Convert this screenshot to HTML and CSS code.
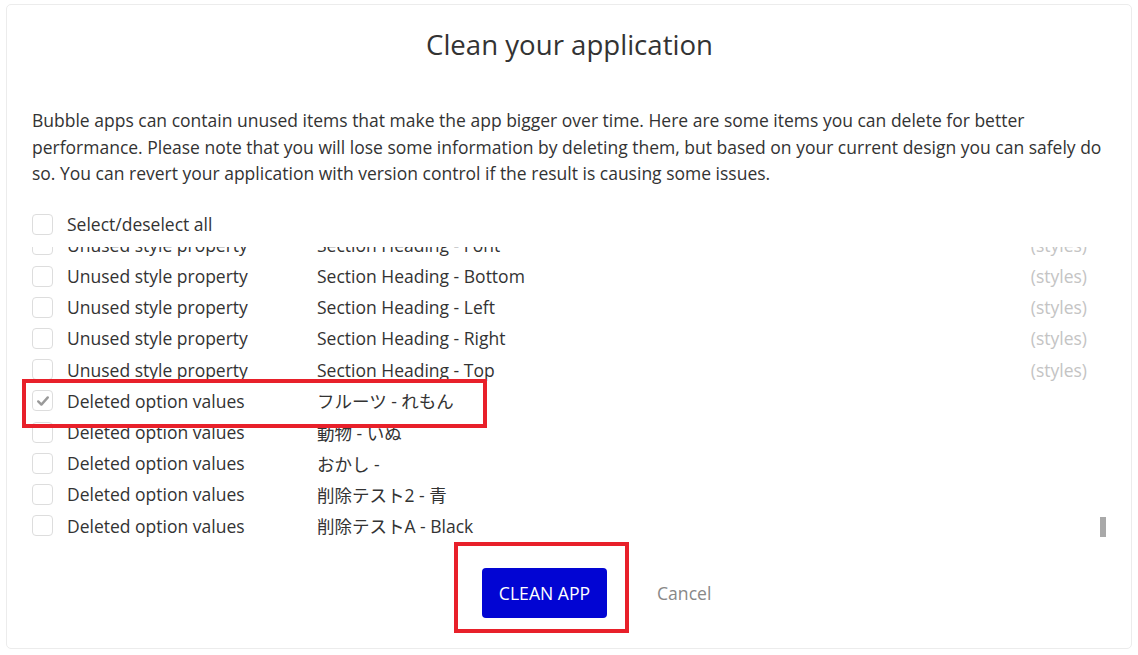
FILE: index.html
```html
<!DOCTYPE html>
<html lang="en">
<head>
    <meta charset="UTF-8">
    <meta name="viewport" content="width=device-width, initial-scale=1.0">
    <title>Clean your application</title>
    <link rel="stylesheet" href="styles.css">
</head>
<body>
    <div class="modal">
        <h2 class="modal-title">Clean your application</h2>
        <p class="modal-text">Bubble apps can contain unused items that make the app bigger over time. Here are some items you can delete for better performance. Please note that you will lose some information by deleting them, but based on your current design you can safely do so. You can revert your application with version control if the result is causing some issues.</p>

        <div class="row select-all">
            <span class="checkbox"></span>
            <span class="label">Select/deselect all</span>
        </div>

        <div class="list-wrap">
            <div class="list-viewport">
                <div class="list">
                    <div class="row">
                        <span class="checkbox"></span>
                        <span class="label">Unused style property</span>
                        <span class="value">Section Heading - Font</span>
                        <span class="source">(styles)</span>
                    </div>
                    <div class="row">
                        <span class="checkbox"></span>
                        <span class="label">Unused style property</span>
                        <span class="value">Section Heading - Bottom</span>
                        <span class="source">(styles)</span>
                    </div>
                    <div class="row">
                        <span class="checkbox"></span>
                        <span class="label">Unused style property</span>
                        <span class="value">Section Heading - Left</span>
                        <span class="source">(styles)</span>
                    </div>
                    <div class="row">
                        <span class="checkbox"></span>
                        <span class="label">Unused style property</span>
                        <span class="value">Section Heading - Right</span>
                        <span class="source">(styles)</span>
                    </div>
                    <div class="row">
                        <span class="checkbox"></span>
                        <span class="label">Unused style property</span>
                        <span class="value">Section Heading - Top</span>
                        <span class="source">(styles)</span>
                    </div>
                    <div class="row">
                        <span class="checkbox checked">
                            <svg viewBox="0 0 20 20" width="16" height="16"><path d="M4 10.5 L8 14.5 L16 5.5" fill="none" stroke="#9a9a9a" stroke-width="3" stroke-linecap="round" stroke-linejoin="round"/></svg>
                        </span>
                        <span class="label">Deleted option values</span>
                        <span class="value">フルーツ - れもん</span>
                        <span class="source"></span>
                    </div>
                    <div class="row">
                        <span class="checkbox"></span>
                        <span class="label">Deleted option values</span>
                        <span class="value">動物 - いぬ</span>
                        <span class="source"></span>
                    </div>
                    <div class="row">
                        <span class="checkbox"></span>
                        <span class="label">Deleted option values</span>
                        <span class="value">おかし -</span>
                        <span class="source"></span>
                    </div>
                    <div class="row">
                        <span class="checkbox"></span>
                        <span class="label">Deleted option values</span>
                        <span class="value">削除テスト2 - 青</span>
                        <span class="source"></span>
                    </div>
                    <div class="row">
                        <span class="checkbox"></span>
                        <span class="label">Deleted option values</span>
                        <span class="value">削除テストA - Black</span>
                        <span class="source"></span>
                    </div>
                </div>
            </div>
            <div class="scroll-track">
                <div class="scroll-thumb"></div>
            </div>
        </div>

        <div class="modal-footer">
            <button class="button">CLEAN APP</button>
            <a href="#" class="cancel">Cancel</a>
        </div>
    </div>

    <!-- annotation marks -->
    <div class="mark mark-row"></div>
    <div class="mark mark-button"></div>
</body>
</html>
```

FILE: styles.css
```css
/* Base Styles */
body {
    font-family: "Open Sans", "Noto Sans CJK JP", sans-serif;
    color: #333;
    margin: 0;
    background: #fff;
    position: relative;
    height: 655px;
    overflow: hidden;
}

/* Modal */
.modal {
    box-sizing: border-box;
    width: 1126px;
    height: 645px;
    margin: 4px 0 0 6px;
    padding: 0 24px 0 25px;
    border: 1px solid #ececec;
    border-radius: 5px;
    background: #fff;
}
.modal-title {
    margin: 0;
    padding-top: 19px;
    font-size: 27.6px;
    font-weight: 400;
    line-height: 40px;
    text-align: center;
    color: #333;
}
.modal-text {
    margin: 43px 0 0;
    font-size: 17.5px;
    line-height: 26.5px;
    color: #333;
}

/* Rows */
.row {
    display: flex;
    align-items: center;
    height: 31.2px;
    font-size: 17.5px;
    padding-right: 13px;
}
.select-all {
    margin-top: 22px;
}
.checkbox {
    box-sizing: border-box;
    flex: none;
    width: 21px;
    height: 21px;
    border: 1px solid #ddd;
    border-radius: 4px;
    background: #fff;
    display: flex;
    align-items: center;
    justify-content: center;
}
.label {
    margin-left: 14px;
    width: 250px;
    flex: none;
    white-space: nowrap;
}
.value {
    flex: 1;
    white-space: nowrap;
}
.source {
    color: #c4c4c4;
}

/* Scrolling list */
.list-wrap {
    display: flex;
    height: 295.1px;
    margin-top: 6.9px;
}
.list-viewport {
    flex: 1;
    overflow: hidden;
}
.list {
    margin-top: -17.3px;
}
.scroll-track {
    width: 7px;
    display: flex;
    flex-direction: column;
    justify-content: flex-end;
    padding-bottom: 5px;
}
.scroll-thumb {
    width: 6px;
    height: 20px;
    background: #a9a9a9;
}

/* Footer */
.modal-footer {
    display: flex;
    align-items: center;
    margin-top: 26.4px;
    padding-left: 450px;
    gap: 50px;
}
.button {
    width: 125px;
    height: 50px;
    padding: 0;
    background: #0205d3;
    color: #fff;
    border: none;
    border-radius: 4px;
    font-family: inherit;
    font-size: 17.6px;
    cursor: pointer;
}
.cancel {
    font-size: 17.6px;
    color: #888;
    text-decoration: none;
}

/* Red annotation boxes */
.mark {
    position: absolute;
    box-sizing: border-box;
    border: 4px solid #e8202a;
}
.mark-row {
    left: 22px;
    top: 379px;
    width: 465px;
    height: 49px;
}
.mark-button {
    left: 454px;
    top: 542px;
    width: 175px;
    height: 91px;
}
```
